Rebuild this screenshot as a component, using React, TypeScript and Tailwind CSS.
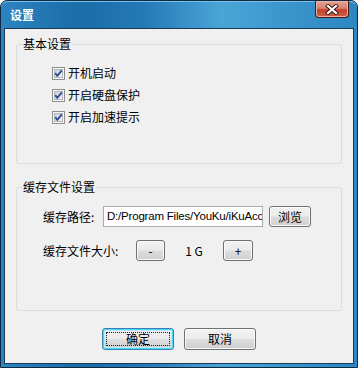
import React from "react";

const CheckBox = () => (
  <svg width="13" height="13" viewBox="0 0 13 13" className="shrink-0">
    <defs>
      <linearGradient id="cbFill" x1="0" y1="0" x2="1" y2="1">
        <stop offset="0" stopColor="#c9cdd3" />
        <stop offset="1" stopColor="#f7f7f7" />
      </linearGradient>
    </defs>
    <rect x="0.5" y="0.5" width="12" height="12" fill="#f5f5f5" stroke="#8e8f8f" />
    <rect x="2.5" y="2.5" width="8" height="8" fill="url(#cbFill)" stroke="#b4b8bd" />
    <path d="M3.2 6.2 L5.3 8.8 L9.8 3.3" fill="none" stroke="#2a4c9c" strokeWidth="1.9" />
  </svg>
);

const Btn = ({ children, className = "", primary = false }: { children: React.ReactNode; className?: string; primary?: boolean }) => (
  <button
    className={
      "relative flex shrink-0 items-center justify-center rounded-[3px] border text-[12px] leading-[14px] text-black bg-[linear-gradient(#f2f2f2_0%,#ebebeb_48%,#dddddd_52%,#cfcfcf_100%)] " +
      (primary
        ? "border-[#3c7fb1] shadow-[inset_0_0_0_1px_#48d6fb,inset_0_0_0_2px_#b8ecfb] "
        : "border-[#707070] shadow-[inset_0_0_0_1px_#fbfbfb] ") +
      className
    }
  >
    {primary && <span className="absolute inset-[3px] border border-dotted border-[#202020]" />}
    <span className="relative">{children}</span>
  </button>
);

const CloseButton = () => (
  <div className="mr-[5px] flex h-[17px] w-[34px] items-center justify-center rounded-b-[4px] border border-t-0 border-[#4a1710] bg-[linear-gradient(#e6a193_0%,#d7826f_45%,#c3412c_55%,#cc6148_100%)] shadow-[inset_0_0_0_1px_#eab3a6]">
    <svg width="14" height="11" viewBox="0 0 14 11">
      <path d="M3 2 L11 9 M11 2 L3 9" stroke="#3b1410" strokeWidth="4" strokeLinecap="square" />
      <path d="M3 2 L11 9 M11 2 L3 9" stroke="#ffffff" strokeWidth="2.2" strokeLinecap="square" />
    </svg>
  </div>
);

export default function App() {
  const checks = ["开机启动", "开启硬盘保护", "开启加速提示"];

  return (
    <div className="flex h-[368px] w-[358px] flex-col rounded-t-[7px] border border-[#0f2a44] bg-[linear-gradient(90deg,#2c84c1_0%,#1b6ca7_22%,#2479b5_40%,#4aa5d7_62%,#3c97cd_78%,#2c86c2_100%)] px-[3px] pb-[3px] font-['Noto_Sans_CJK_SC',sans-serif] shadow-[inset_0_1px_0_#7cc3ec]">
      {/* title bar */}
      <div className="flex h-[27px] shrink-0 items-start justify-between">
        <span className="ml-[6px] mt-[7px] text-[12px] font-bold leading-[14px] text-white">设置</span>
        <CloseButton />
      </div>

      {/* body */}
      <div className="flex flex-1 flex-col border border-[#1a3b57] bg-[#f0f0f0] px-[11px] text-[12px] text-black">
        <fieldset className="mt-[8px] h-[127px] rounded-[3px] border border-[#d5dfe5]">
          <legend className="ml-[5px] px-[1px] leading-[14px]">基本设置</legend>
          <div className="flex flex-col pl-[35px] pt-[11px]">
            {checks.map((c) => (
              <div key={c} className="flex h-[22px] items-center gap-[3px]">
                <CheckBox />
                <span className="leading-[14px]">{c}</span>
              </div>
            ))}
          </div>
        </fieldset>

        <fieldset className="mt-[16px] h-[131px] rounded-[3px] border border-[#d5dfe5]">
          <legend className="ml-[5px] px-[1px] leading-[14px]">缓存文件设置</legend>
          <div className="flex flex-col pl-[26px] pt-[12px]">
            <div className="flex h-[21px] items-center">
              <span className="w-[60px] shrink-0 leading-[14px]">缓存路径:</span>
              <div className="flex h-[21px] w-[160px] shrink-0 items-center overflow-hidden whitespace-nowrap border border-[#a5acb5] bg-white pl-[3px] font-['Liberation_Sans',sans-serif] text-[11.5px] tracking-[-0.2px]">
                <span className="block w-full overflow-hidden">D:/Program Files/YouKu/iKuAcc/i</span>
              </div>
              <Btn className="ml-[6px] h-[21px] w-[42px]">浏览</Btn>
            </div>
            <div className="mt-[13px] flex h-[21px] items-center">
              <span className="w-[93px] shrink-0 leading-[14px]">缓存文件大小:</span>
              <Btn className="h-[21px] w-[29px]">-</Btn>
              <span className="w-[58px] text-center leading-[14px]">1 G</span>
              <Btn className="h-[21px] w-[30px]">+</Btn>
            </div>
          </div>
        </fieldset>

        <div className="mt-[17px] flex justify-center gap-[10px]">
          <Btn primary className="h-[22px] w-[72px]">确定</Btn>
          <Btn className="h-[22px] w-[72px]">取消</Btn>
        </div>
      </div>
    </div>
  );
}
